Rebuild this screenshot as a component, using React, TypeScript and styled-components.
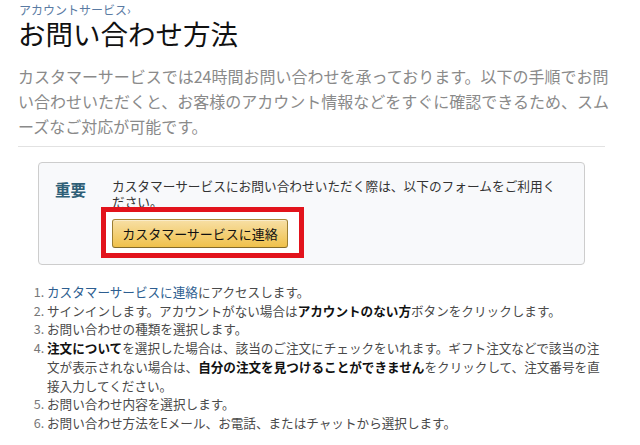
import React from 'react'
import styled, { createGlobalStyle } from 'styled-components'

const GlobalStyle = createGlobalStyle`
  body {
    margin: 0;
    background: #fff;
    font-family: "Noto Sans CJK JP", "Noto Sans", sans-serif;
  }
`

const Page = styled.div`
  padding: 3px 0 0 18px;
  width: 622px;
`

const Breadcrumb = styled.a`
  display: block;
  margin-left: 1px;
  font-size: 12px;
  line-height: 14px;
  color: #5a7ba3;
  text-decoration: none;
`

const Title = styled.h1`
  margin: 0;
  font-size: 27.5px;
  line-height: 32px;
  font-weight: 400;
  color: #111;
`

const Lead = styled.p`
  margin: 15px 0 0;
  width: 600px;
  font-size: 16px;
  line-height: 25px;
  color: #8a8a8a;
`

const Divider = styled.hr`
  margin: 7px 0 0;
  width: 587px;
  border: 0;
  border-top: 1px solid #e2e2e2;
`

const Notice = styled.div`
  margin: 15px 0 0 20px;
  width: 513px;
  display: flex;
  padding: 15px 16px 6px;
  background: #f8f9fb;
  border: 1px solid #cdcdcd;
  border-radius: 4px;
`

const Label = styled.div`
  flex: 0 0 57px;
  font-size: 15.5px;
  line-height: 22px;
  font-weight: 700;
  color: #2f5f77;
`

const NoticeBody = styled.div`
  flex: 1;
`

const NoticeText = styled.div`
  width: 452px;
  font-size: 12.7px;
  line-height: 16px;
  color: #333;
`

const Highlight = styled.div`
  display: inline-block;
  margin: -3px 0 0 -11px;
  padding: 7px 11px 5px 6px;
  border: 5px solid #e2131c;
  background: #fff;
`

const Button = styled.button`
  display: block;
  width: 176px;
  height: 29px;
  padding: 0;
  border: 1px solid;
  border-color: #a88734 #9c7e31 #846a29;
  border-radius: 3px;
  background: linear-gradient(to bottom, #f7dfa5, #f0c14b);
  box-shadow: inset 0 1px 0 rgba(255, 255, 255, 0.4);
  font-family: inherit;
  font-size: 13px;
  color: #111;
  cursor: pointer;
`

const Steps = styled.ol`
  margin: 18px 0 0;
  padding-left: 29px;
  width: 560px;
  font-size: 12.6px;
  line-height: 18.7px;
  color: #4a4a4a;

  li::marker {
    color: #777;
  }
`

const Link = styled.a`
  color: #2d5e90;
  text-decoration: none;
`

const Strong = styled.b`
  color: #111;
`

const steps: React.ReactNode[] = [
  <>
    <Link href='#'>カスタマーサービスに連絡</Link>にアクセスします。
  </>,
  <>
    サインインします。アカウントがない場合は<Strong>アカウントのない方</Strong>ボタンをクリックします。
  </>,
  <>お問い合わせの種類を選択します。</>,
  <>
    <Strong>注文について</Strong>を選択した場合は、該当のご注文にチェックをいれます。ギフト注文などで該当の注文が表示されない場合は、
    <Strong>自分の注文を見つけることができません</Strong>をクリックして、注文番号を直接入力してください。
  </>,
  <>お問い合わせ内容を選択します。</>,
  <>お問い合わせ方法をEメール、お電話、またはチャットから選択します。</>,
]

const App: React.FC = () => {
  return (
    <>
      <GlobalStyle />
      <Page>
        <Breadcrumb href='#'>アカウントサービス›</Breadcrumb>
        <Title>お問い合わせ方法</Title>
        <Lead>
          カスタマーサービスでは24時間お問い合わせを承っております。以下の手順でお問い合わせいただくと、お客様のアカウント情報などをすぐに確認できるため、スムーズなご対応が可能です。
        </Lead>
        <Divider />
        <Notice>
          <Label>重要</Label>
          <NoticeBody>
            <NoticeText>カスタマーサービスにお問い合わせいただく際は、以下のフォームをご利用ください。</NoticeText>
            <Highlight>
              <Button type='button'>カスタマーサービスに連絡</Button>
            </Highlight>
          </NoticeBody>
        </Notice>
        <Steps>
          {steps.map((step, index) => (
            <li key={index}>{step}</li>
          ))}
        </Steps>
      </Page>
    </>
  )
}

export default App
